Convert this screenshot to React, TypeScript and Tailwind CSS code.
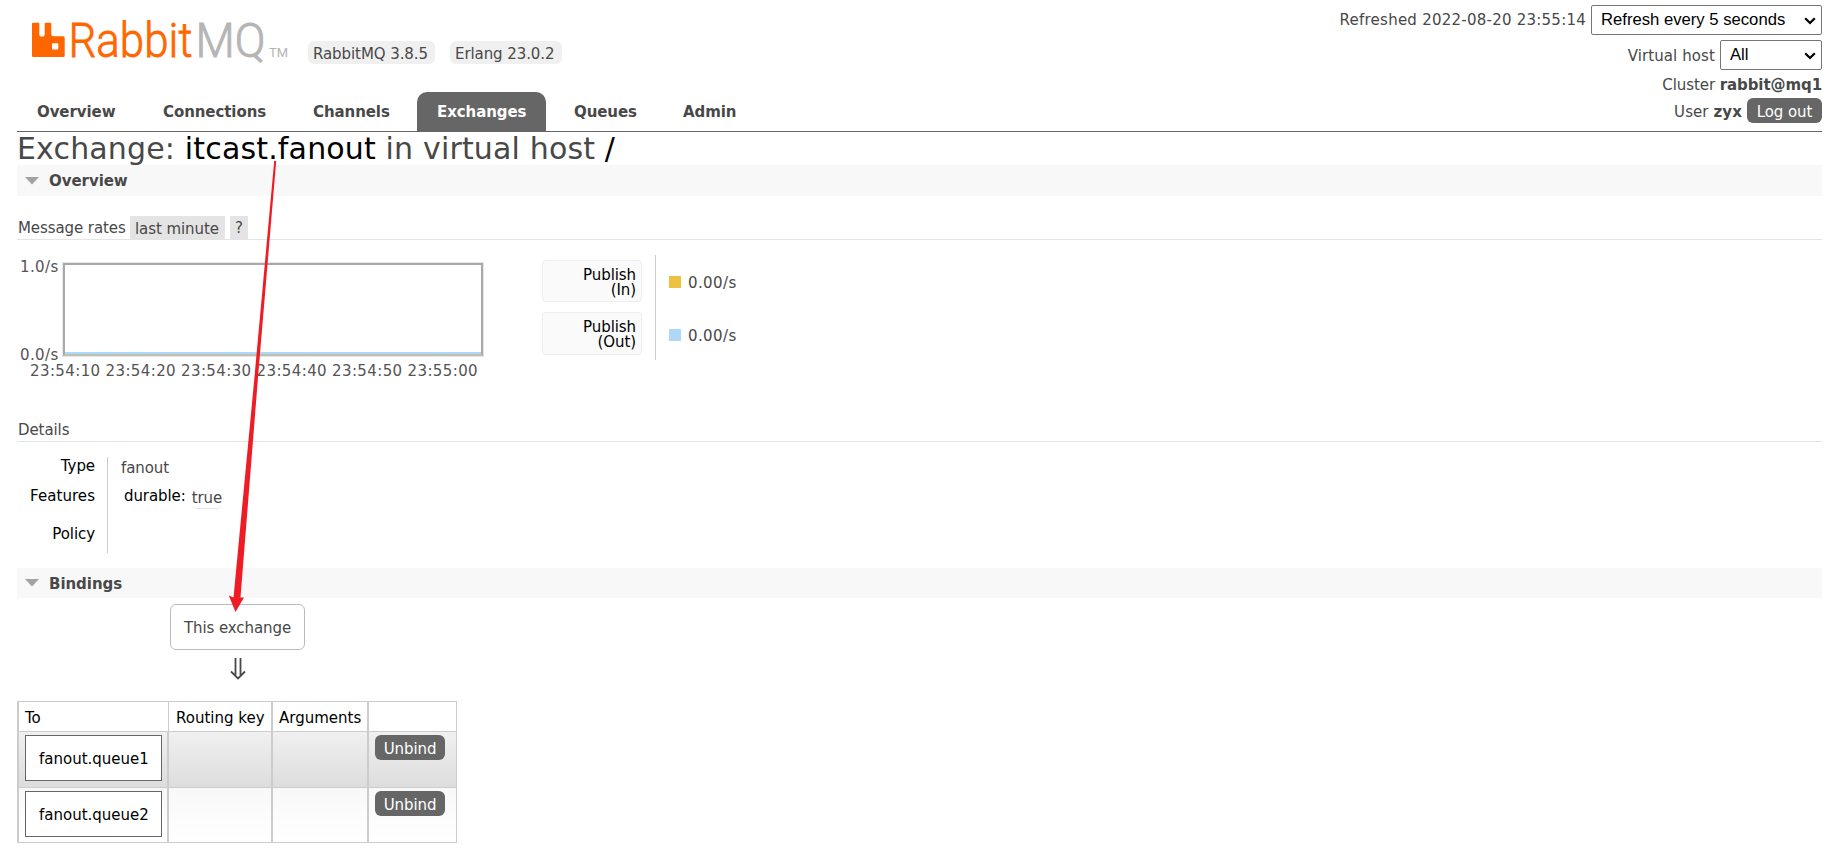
import React from "react";

const Section = ({ title, className }: { title: string; className: string }) => (
  <div className={`flex items-center bg-[#f8f8f8] ${className}`}>
    <svg className="ml-2 mr-2.5 h-2 w-3.5" viewBox="0 0 14 8">
      <path d="M0 0H14L7 7.5Z" fill="#a2a2a2" />
    </svg>
    <h2 className="pt-px font-bold leading-4 tracking-[-0.05px]">{title}</h2>
  </div>
);

const Select = ({ label, className }: { label: string; className: string }) => (
  <div className={`flex h-[30px] shrink-0 items-center justify-between rounded-[2px] border border-[#767676] bg-white pb-px pl-[9px] pr-[5px] font-['Liberation_Sans',sans-serif] text-[16.67px] tracking-normal text-black ${className}`}>
    <span className="whitespace-nowrap">{label}</span>
    <svg className="relative top-px h-2 w-3" viewBox="0 0 12 8">
      <path d="M1.2 1.2L6 6L10.8 1.2" fill="none" stroke="#000" strokeWidth="2.2" />
    </svg>
  </div>
);

const tabs = [
  { name: "Overview", cls: "w-[126px] pl-5" },
  { name: "Connections", cls: "w-[150px] pl-5" },
  { name: "Channels", cls: "w-[124px] pl-5" },
  { name: "Exchanges", cls: "w-[129px] pl-5 rounded-t-[10px] bg-[#666] text-white" },
  { name: "Queues", cls: "ml-2 w-[109px] pl-5" },
  { name: "Admin", cls: "w-[100px] pl-5" },
];

const times = ["23:54:10", "23:54:20", "23:54:30", "23:54:40", "23:54:50", "23:55:00"];

const rates = [
  { kind: "(In)", box: "h-[42px]", swatch: "bg-[#edc240]" },
  { kind: "(Out)", box: "h-[43px]", swatch: "bg-[#afd8f8]" },
];

const bindings = [
  { queue: "fanout.queue1", row: "h-14 bg-linear-to-b from-[#f0f0f0] to-[#dddddd]" },
  { queue: "fanout.queue2", row: "h-[55px] bg-linear-to-b from-[#f8f8f8] to-white" },
];

export default function App() {
  return (
    <div className="relative h-[851px] w-[1844px] overflow-hidden bg-white pl-[17px] pr-[22px] font-['DejaVu_Sans',Verdana,sans-serif] text-[15px] leading-[18px] tracking-[-0.08px] text-[#484848]">
      <header className="flex h-[92px] justify-between">
        <div className="flex">
          <svg className="ml-[15px] mt-3 h-[56px] w-[260px]" viewBox="32 12 260 56">
            <path d="M33 22.700H38.300Q39.300 22.700 39.300 23.700V34.500Q39.300 36.500 41 36.500H43Q44.700 36.500 44.700 34.500V23.700Q44.700 22.700 45.700 22.700H50.300Q51.300 22.700 51.300 23.700V34.300Q51.300 36.200 53.200 36.200H63.200Q64.700 36.200 64.700 37.700V55.800Q64.700 57 63.500 57H33.200Q32 57 32 55.800V23.700Q32 22.700 33 22.700ZM53 43.300Q52 43.300 52 44.300V48.500Q52 49.500 53 49.500H57.300Q58.300 49.500 58.300 48.500V44.300Q58.300 43.300 57.300 43.300Z" fill="#f60" fillRule="evenodd" />
            <text x="68.5" y="57" fontFamily="Roboto" fontWeight="300" fontSize="47.5" letterSpacing="0" textLength="124" lengthAdjust="spacingAndGlyphs" fill="#f60" stroke="#f60" strokeWidth="0.8">Rabbit</text>
            <text x="195.5" y="57" fontFamily="Roboto" fontWeight="300" fontSize="47.5" letterSpacing="0" textLength="70" lengthAdjust="spacingAndGlyphs" fill="#b5b5b5" stroke="#b5b5b5" strokeWidth="0.9">MQ</text>
            <text x="269" y="57" fontFamily="Roboto" fontSize="12.5" letterSpacing="0" textLength="19" lengthAdjust="spacingAndGlyphs" fill="#b5b5b5">TM</text>
          </svg>
          <div className="ml-4 mt-[41px] flex h-[23px] gap-[15px] leading-[26px]">
            <span className="w-[127px] rounded-md bg-[#f0f0f0] pl-[5px]">RabbitMQ 3.8.5</span>
            <span className="w-[112px] rounded-md bg-[#f0f0f0] pl-[5px]">Erlang 23.0.2</span>
          </div>
        </div>
        <div className="flex flex-col items-end pt-[5px]">
          <div className="flex gap-[5px]">
            <span className="pt-[6px] tracking-[0.24px]">Refreshed 2022-08-20 23:55:14</span>
            <Select label="Refresh every 5 seconds" className="w-[231px]" />
          </div>
          <div className="mt-[5px] flex gap-[5px]">
            <span className="pt-[7px] tracking-[0.1px]">Virtual host</span>
            <Select label="All" className="w-[102px]" />
          </div>
          <div className="mt-[6px]">
            Cluster <b>rabbit@mq1</b>
          </div>
          <div className="mt-1 flex gap-[5px]">
            <span className="pt-[5px] tracking-[0.1px]">
              User <b>zyx</b>
            </span>
            <button className="h-[25px] w-[75px] shrink-0 rounded-md bg-[#666] pt-0.5 text-white">Log out</button>
          </div>
        </div>
      </header>

      <nav className="flex h-10 border-b border-[#666] font-bold leading-[41px]">
        {tabs.map((t) => (
          <div key={t.name} className={t.cls}>
            {t.name}
          </div>
        ))}
      </nav>

      <h1 className="h-[33px] whitespace-pre pt-px text-[30px] leading-8 tracking-[0.16px]">
        Exchange: <span className="text-black">itcast.fanout</span> in virtual host <span className="text-black">/</span>
      </h1>
      <Section title="Overview" className="h-[31px]" />

      <div className="mt-5 flex h-6 border-b border-[#e4e4e4]">
        <h3 className="w-[113px] pl-px pt-[3px]">Message rates</h3>
        <span className="mr-[5px] w-[95px] bg-[#e4e4e4] pl-[5px] pt-1">last minute</span>
        <span className="w-[18px] bg-[#e4e4e4] pt-[3px] text-center">?</span>
      </div>

      <div className="flex h-[180px]">
        <div className="w-[525px] pt-[23px] tracking-[0.4px] text-[#545454]">
          <div className="flex">
            <div className="flex h-[93px] w-[46px] flex-col justify-between pl-[3px]">
              <span className="relative -top-[5px]">1.0/s</span>
              <span className="relative top-2">0.0/s</span>
            </div>
            <div className="flex h-[93px] w-[420px] flex-col justify-end border-2 border-[#a9a9a9] border-b-[#bfc0b4] shadow-[0_0_0_1px_#e6e6e6]">
              <div className="h-0.5 bg-[#afd8f8]" />
            </div>
          </div>
          <div className="flex pl-[13px] pt-1.5">
            {times.map((t) => (
              <span key={t} className="w-[75.5px]">
                {t}
              </span>
            ))}
          </div>
        </div>
        <div className="mt-[15px] flex h-[105px] w-[114px] flex-col gap-2.5 border-r border-[#ccc] pt-[5px] leading-[15px] text-black">
          {rates.map((r) => (
            <div key={r.kind} className={`w-[100px] rounded border border-[#eee] bg-[#fafafa] pr-[5px] pt-[7px] text-right ${r.box}`}>
              Publish
              <br />
              {r.kind}
            </div>
          ))}
        </div>
        <div className="flex flex-col gap-[35px] pl-[13px] pt-[33px] tracking-[0.4px]">
          {rates.map((r) => (
            <div key={r.kind} className="flex h-[18px] items-center gap-[7px]">
              <span className={`h-3 w-3 ${r.swatch}`} />
              <span className="pt-px">0.00/s</span>
            </div>
          ))}
        </div>
      </div>

      <h3 className="h-[22px] border-b border-[#e4e4e4] pl-px pt-px">Details</h3>
      <div className="mt-[15px] flex h-24">
        <div className="flex w-[91px] flex-col border-r border-[#ccc] pr-3 text-right text-black">
          <span className="h-[30px]">Type</span>
          <span className="h-[38px] tracking-[0.05px]">Features</span>
          <span>Policy</span>
        </div>
        <div className="pl-[13px] pt-0.5">
          <div className="h-7">fanout</div>
          <div className="flex gap-1.5 pl-[3px]">
            <span className="text-black">durable:</span>
            <span className="mt-0.5 h-5 rounded-[5px] border-b border-dotted border-[#ccc]">true</span>
          </div>
        </div>
      </div>

      <Section title="Bindings" className="mt-[15px] h-[30px]" />

      <div className="ml-[153px] mt-1.5 flex w-[135px] flex-col items-center">
        <div className="h-[46px] w-full rounded-md border border-[#bbb] pt-3.5 text-center">This exchange</div>
        <svg className="mt-2 h-[22px] w-4" viewBox="0 0 16 22">
          <path d="M5.500 0V17M10.500 0V17M1 13.500L8 20.500L15 13.500" fill="none" stroke="#484848" strokeWidth="1.800" />
        </svg>
      </div>

      <div className="mt-[21px] w-[440px] border border-l-2 border-[#ccc] text-black">
        <div className="flex h-[29px] divide-x-2 divide-[#ccc] leading-8">
          <div className="w-[150px] border-r pl-1.5">To</div>
          <div className="w-[104px] pl-[7px] tracking-normal">Routing key</div>
          <div className="w-24 pl-1.5 tracking-normal">Arguments</div>
          <div className="flex-1" />
        </div>
        {bindings.map((b) => (
          <div key={b.queue} className={`flex divide-x-2 divide-[#ccc] border-t border-[#ccc] ${b.row}`}>
            <div className="w-[150px] pl-1.5 pt-[3px]">
              <div className="h-[46px] w-[137px] border border-[#666] bg-white pl-[13px] pt-3.5 tracking-normal">{b.queue}</div>
            </div>
            <div className="w-[104px]" />
            <div className="w-24" />
            <div className="flex-1 pl-1.5 pt-[3px]">
              <button className="h-[25px] w-[70px] rounded-md bg-[#666] pt-0.5 text-white">Unbind</button>
            </div>
          </div>
        ))}
      </div>

      <svg className="pointer-events-none absolute left-0 top-0 h-[851px] w-[400px]" viewBox="0 0 400 851">
        <path d="M274.200 161L276.200 161L257.800 380L240.500 597.500L244 597.500L235.500 612L228.800 595.500L233.500 597.500L254.200 380Z" fill="#ee1c24" />
      </svg>
    </div>
  );
}
